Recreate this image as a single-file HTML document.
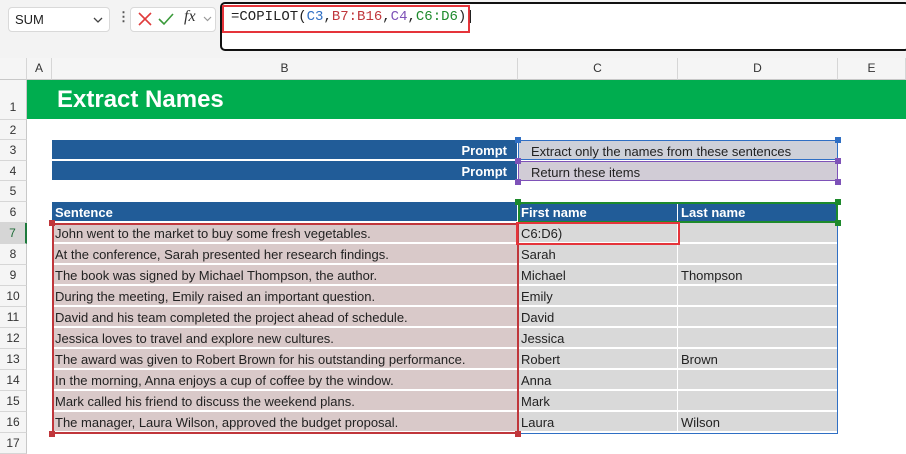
<!DOCTYPE html>
<html><head><style>
*{margin:0;padding:0;box-sizing:border-box}
body{width:906px;height:453px;overflow:hidden;background:#fff;font-family:"Liberation Sans",sans-serif;position:relative;font-size:13px;color:#222}
.a{position:absolute}
.rh{position:absolute;left:0;width:27px;text-align:center;font-size:12px;color:#333;background:#f5f5f5;border-bottom:1px solid #d6d6d6;border-right:1px solid #c8c8c8}
.ch{position:absolute;top:58px;height:22px;line-height:21px;text-align:center;font-size:12px;color:#333;background:#f5f5f5;border-right:1px solid #d6d6d6;border-bottom:1px solid #c8c8c8}
.c{position:absolute;height:20px;line-height:21px;padding-left:3px;white-space:nowrap;overflow:hidden;border-bottom:1px solid #fff;border-right:1px solid #fff}
.s{background:#d9c9c9;left:52px;width:466px}
.f{background:#d9d9d9;left:518px;width:160px}
.l{background:#d9d9d9;left:678px;width:160px}
.h{background:#215c98;color:#fff;font-weight:bold}
.hd{position:absolute;width:6px;height:6px}
</style></head><body>
<div class="a" style="left:0;top:0;width:906px;height:58px;background:#f3f3f3"></div>
<div class="a" style="left:8px;top:7px;width:102px;height:25px;background:#fff;border:1px solid #d9d9d9;border-radius:4px;line-height:23px;padding-left:6px;font-size:13px">SUM<svg class="a" style="left:84px;top:9px" width="10" height="6"><path d="M1 1L5 5L9 1" stroke="#444" fill="none" stroke-width="1.3"/></svg></div>
<div class="a" style="left:117px;top:9px;color:#555;font-weight:bold">&#8942;</div>
<div class="a" style="left:130px;top:7px;width:86px;height:25px;background:#fff;border:1px solid #d9d9d9;border-radius:4px"></div>
<svg class="a" style="left:138px;top:12px" width="14" height="14"><path d="M1 1L13 13M13 1L1 13" stroke="#e03c3c" stroke-width="1.6"/></svg>
<svg class="a" style="left:158px;top:12px" width="16" height="14"><path d="M1 7L6 12L15 2" stroke="#3a9a3a" fill="none" stroke-width="1.6"/></svg>
<div class="a" style="left:184px;top:8px;font-family:'Liberation Serif',serif;font-style:italic;font-size:16px;color:#333">fx</div>
<svg class="a" style="left:203px;top:16px" width="9" height="6"><path d="M1 1L4.5 4.5L8 1" stroke="#999" fill="none" stroke-width="1.2"/></svg>
<div class="a" style="left:220px;top:2px;width:690px;height:49px;background:#fff;border:2px solid #111;border-radius:5px"></div>
<div class="a" style="left:222px;top:5px;width:248px;height:28px;border:2px solid #e5343a"></div>
<div class="a" style="left:231px;top:9px;font-family:'Liberation Mono',monospace;font-size:14px;color:#222">=COPILOT(<span style="color:#2f6fc4">C3</span>,<span style="color:#c0363b">B7:B16</span>,<span style="color:#7e52b8">C4</span>,<span style="color:#1d8a2c">C6:D6</span>)|</div>

<div class="ch" style="left:0;width:27px"></div>
<div class="ch" style="left:27px;width:25px">A</div>
<div class="ch" style="left:52px;width:466px">B</div>
<div class="ch" style="left:518px;width:160px">C</div>
<div class="ch" style="left:678px;width:160px">D</div>
<div class="ch" style="left:838px;width:68px">E</div>

<div class="rh" style="top:80px;height:40px;line-height:54px">1</div>
<div class="a" style="left:27px;top:80px;width:879px;height:39px;background:#00ad4f"></div>
<div class="a" style="left:57px;top:86px;color:#fff;font-weight:bold;font-size:24px">Extract Names</div>

<div class="rh" style="top:120px;height:20px;line-height:20px">2</div>
<div class="rh" style="top:140px;height:21px;line-height:21px">3</div>
<div class="rh" style="top:161px;height:20px;line-height:20px">4</div>
<div class="rh" style="top:181px;height:21px;line-height:21px">5</div>
<div class="rh" style="top:202px;height:21px;line-height:21px">6</div>
<div class="rh" style="top:223px;height:21px;line-height:21px;background:#d6d6d6;color:#1d6b37;border-right:2px solid #1d7a3c">7</div>
<div class="rh" style="top:244px;height:21px;line-height:21px">8</div>
<div class="rh" style="top:265px;height:21px;line-height:21px">9</div>
<div class="rh" style="top:286px;height:21px;line-height:21px">10</div>
<div class="rh" style="top:307px;height:21px;line-height:21px">11</div>
<div class="rh" style="top:328px;height:21px;line-height:21px">12</div>
<div class="rh" style="top:349px;height:21px;line-height:21px">13</div>
<div class="rh" style="top:370px;height:21px;line-height:21px">14</div>
<div class="rh" style="top:391px;height:21px;line-height:21px">15</div>
<div class="rh" style="top:412px;height:21px;line-height:21px">16</div>
<div class="rh" style="top:433px;height:21px;line-height:21px">17</div>

<div class="c h" style="left:52px;width:466px;top:140px;text-align:right;padding-right:10px">Prompt</div>
<div class="c h" style="left:52px;width:466px;top:161px;text-align:right;padding-right:10px">Prompt</div>
<div class="c" style="left:518px;width:320px;top:140px;background:#cdd0d9;padding-left:12px;border:1.5px solid #2f6fc4">Extract only the names from these sentences</div>
<div class="c" style="left:518px;width:320px;top:161px;background:#d1ccd6;padding-left:12px;border:1.5px solid #7e52b8">Return these items</div>

<div class="c h s" style="top:202px">Sentence</div>
<div class="c h f" style="top:202px">First name</div>
<div class="c h l" style="top:202px">Last name</div>

<div class="c s" style="top:223px">John went to the market to buy some fresh vegetables.</div>
<div class="c s" style="top:244px">At the conference, Sarah presented her research findings.</div>
<div class="c s" style="top:265px">The book was signed by Michael Thompson, the author.</div>
<div class="c s" style="top:286px">During the meeting, Emily raised an important question.</div>
<div class="c s" style="top:307px">David and his team completed the project ahead of schedule.</div>
<div class="c s" style="top:328px">Jessica loves to travel and explore new cultures.</div>
<div class="c s" style="top:349px">The award was given to Robert Brown for his outstanding performance.</div>
<div class="c s" style="top:370px">In the morning, Anna enjoys a cup of coffee by the window.</div>
<div class="c s" style="top:391px">Mark called his friend to discuss the weekend plans.</div>
<div class="c s" style="top:412px">The manager, Laura Wilson, approved the budget proposal.</div>

<div class="c f" style="top:223px">C6:D6)</div><div class="c l" style="top:223px"></div>
<div class="c f" style="top:244px">Sarah</div><div class="c l" style="top:244px"></div>
<div class="c f" style="top:265px">Michael</div><div class="c l" style="top:265px">Thompson</div>
<div class="c f" style="top:286px">Emily</div><div class="c l" style="top:286px"></div>
<div class="c f" style="top:307px">David</div><div class="c l" style="top:307px"></div>
<div class="c f" style="top:328px">Jessica</div><div class="c l" style="top:328px"></div>
<div class="c f" style="top:349px">Robert</div><div class="c l" style="top:349px">Brown</div>
<div class="c f" style="top:370px">Anna</div><div class="c l" style="top:370px"></div>
<div class="c f" style="top:391px">Mark</div><div class="c l" style="top:391px"></div>
<div class="c f" style="top:412px">Laura</div><div class="c l" style="top:412px">Wilson</div>

<div class="a" style="left:518px;top:223px;width:320px;height:211px;border-right:1.5px solid #2f6fc4;border-bottom:1.5px solid #2f6fc4"></div>
<div class="a" style="left:52px;top:223px;width:467px;height:211px;border:2px solid #c0363b"></div>
<div class="a" style="left:518px;top:202px;width:320px;height:21px;border:2px solid #1d8a2c"></div>
<div class="a" style="left:516px;top:222px;width:164px;height:23px;border:2px solid #e5343a"></div>

<div class="hd" style="left:515px;top:137px;background:#2f6fc4"></div>
<div class="hd" style="left:835px;top:137px;background:#2f6fc4"></div>
<div class="hd" style="left:515px;top:158px;background:#7e52b8"></div>
<div class="hd" style="left:835px;top:158px;background:#7e52b8"></div>
<div class="hd" style="left:515px;top:179px;background:#7e52b8"></div>
<div class="hd" style="left:835px;top:179px;background:#7e52b8"></div>
<div class="hd" style="left:515px;top:199px;background:#1d8a2c"></div>
<div class="hd" style="left:835px;top:199px;background:#1d8a2c"></div>
<div class="hd" style="left:835px;top:220px;background:#1d8a2c"></div>
<div class="hd" style="left:49px;top:220px;background:#c0363b"></div>
<div class="hd" style="left:49px;top:431px;background:#c0363b"></div>
<div class="hd" style="left:515px;top:431px;background:#c0363b"></div>
</body></html>
